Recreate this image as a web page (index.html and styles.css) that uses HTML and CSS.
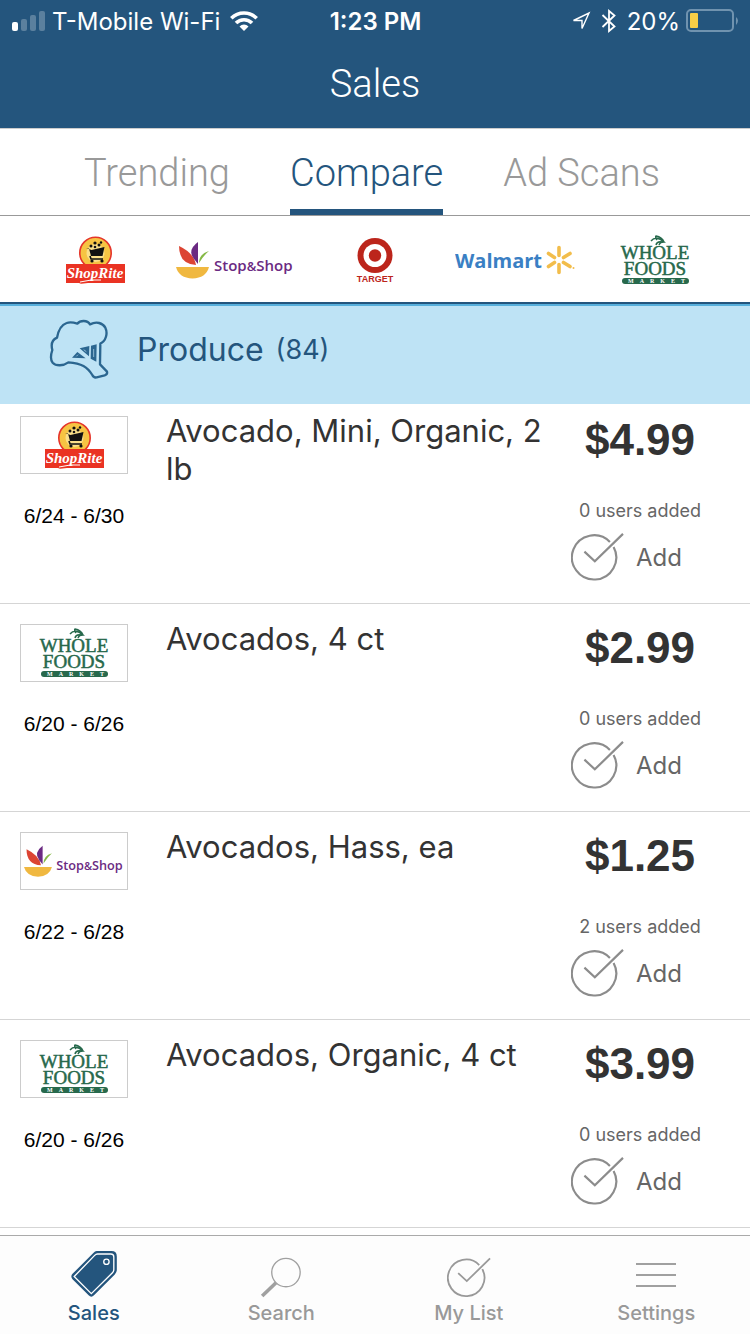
FILE: index.html
```html
<!DOCTYPE html>
<html lang="en">
<head>
    <meta charset="UTF-8">
    <meta name="viewport" content="width=device-width, initial-scale=1.0">
    <title>Sales</title>
    <link rel="stylesheet" href="styles.css">
</head>
<body>
    <!-- shared logos and icons -->
    <svg class="sprite" aria-hidden="true">
        <symbol id="shoprite" viewBox="0 0 60 48">
            <circle cx="30.5" cy="17" r="15.7" fill="#f6c443" stroke="#e5352b" stroke-width="1.6"/>
            <circle cx="30.5" cy="17" r="9" fill="#fbe08a"/>
            <path d="M21 12l3 .6 2 7.400h11.500l2-9-13 3z" fill="#111"/>
            <path d="M25 20l1 3h12" fill="none" stroke="#111" stroke-width="1.6"/>
            <circle cx="27" cy="25" r="1.6" fill="#111"/>
            <circle cx="37" cy="25" r="1.6" fill="#111"/>
            <circle cx="26" cy="10" r="1.500" fill="#111"/>
            <circle cx="30" cy="7" r="1.600" fill="#111"/>
            <circle cx="34" cy="9" r="1.500" fill="#111"/>
            <circle cx="30" cy="11" r="1.300" fill="#111"/>
            <circle cx="36" cy="6.500" r="1.200" fill="#111"/>
            <path d="M1 28h59v19H23l-9 1 2-1H1z" fill="#ea3323"/>
            <text class="shoprite-name" x="30" y="42" text-anchor="middle">ShopRite</text>
            <path d="M15 46q12-3 21-2" fill="none" stroke="#fff" stroke-width="1"/>
        </symbol>
        <symbol id="stopshop" viewBox="0 0 118 40">
            <path d="M0 27h33q-3 11-16.500 11.500Q3 38 0 27z" fill="#f0b840"/>
            <path d="M3 6q0 18 17 19Q18 13 3 6z" fill="#dc4433"/>
            <path d="M22 2q-11 8-4 17l4 5z" fill="#6b2a82"/>
            <path d="M23 23q0-9 10-12-5 4-10 12z" fill="#86b946"/>
            <text class="stopshop-name" x="38" y="31">Stop<tspan class="amp">&amp;</tspan>Shop</text>
        </symbol>
        <symbol id="target" viewBox="0 0 40 48">
            <circle cx="20" cy="19.500" r="17.500" fill="#bc251b"/>
            <circle cx="20" cy="19.500" r="11.500" fill="#fff"/>
            <circle cx="20" cy="19.500" r="6.200" fill="#bc251b"/>
            <text class="target-name" x="20" y="46" text-anchor="middle">TARGET</text>
        </symbol>
        <symbol id="walmart" viewBox="0 0 120 36">
            <text class="walmart-name" x="0" y="26">Walmart</text>
            <path d="M104 13.500v-8M104 22.500v8M108.500 15.500l6.500-4M108.500 20.500l6.500 4M99.500 15.500l-6-4M99.500 20.500l-6 4" stroke="#f2bd4b" stroke-width="3.600" stroke-linecap="round"/>
            <circle cx="118.500" cy="26" r="1" fill="#f2bd4b"/>
        </symbol>
        <symbol id="wholefoods" viewBox="0 0 70 50">
            <text class="whole-name" x="35" y="24" text-anchor="middle">WHOLE</text>
            <text class="whole-name" x="35" y="40" text-anchor="middle">FOODS</text>
            <path d="M31 6q5-6 13 1-4 0-5 3M37 5q-2-3-1-4 6 1 8 6M36 10q1-4 6-3" fill="none" stroke="#27694c" stroke-width="1.500"/>
            <rect x="2" y="43" width="67" height="6" rx="3" fill="#27694c"/>
            <text class="market-name" x="8" y="48">MARKET</text>
        </symbol>
        <symbol id="check" viewBox="60 382 158 148">
            <path d="M187 426A66 66 0 1 1 176 411M100 440L131 469L215 387" fill="none" stroke="currentColor" stroke-width="6.500"/>
        </symbol>
    </svg>

    <header class="header">
        <div class="status">
            <div class="status-side">
                <svg width="34" height="20" viewBox="0 0 34 20" fill="#fff">
                    <rect x="0" y="11" width="6" height="9" rx="2"/>
                    <g opacity=".25">
                        <rect x="9" y="8" width="6" height="12" rx="2"/>
                        <rect x="18" y="4" width="6" height="16" rx="2"/>
                        <rect x="27" y="0" width="6" height="20" rx="2"/>
                    </g>
                </svg>
                <span class="carrier">T-Mobile Wi-Fi</span>
                <svg class="wifi" width="28" height="20" viewBox="0 0 28 20" fill="none" stroke="#fff" stroke-width="3.600">
                    <path d="M1.300 7.300a18 18 0 0 1 25.400 0M6 12a11.300 11.300 0 0 1 16 0"/>
                    <path d="M14 20l-4.500-4.600a6.400 6.400 0 0 1 9 0z" fill="#fff" stroke="none"/>
                </svg>
            </div>
            <time class="clock">1:23 PM</time>
            <div class="status-side status-right">
                <svg width="20" height="20" viewBox="0 0 20 20" fill="none" stroke="#fff" stroke-width="1.400">
                    <path d="M18 2L11 17.500V9.500H2.500z"/>
                </svg>
                <svg class="bluetooth" width="16" height="24" viewBox="0 0 16 24" fill="none" stroke="#fff" stroke-width="1.800">
                    <path d="M1.500 6l12 11.500L8 22V2l5.500 4.500L1.500 18"/>
                </svg>
                <span>20%</span>
                <svg class="battery" width="53" height="24" viewBox="0 0 53 24">
                    <rect x="1" y="1" width="46" height="21" rx="4" fill="none" stroke="#7093af" stroke-width="2"/>
                    <rect x="4" y="4" width="8" height="15" rx="1" fill="#f8ce46"/>
                    <path d="M50 8q4 3.500 0 8z" fill="#7093af"/>
                </svg>
            </div>
        </div>
        <h1 class="title">Sales</h1>
    </header>

    <nav class="tabs">
        <a href="#trending">Trending</a>
        <a href="#compare" class="active">Compare</a>
        <a href="#scans">Ad Scans</a>
    </nav>

    <main class="main">
        <div class="stores">
            <svg width="60" height="48" role="img" aria-label="ShopRite"><use href="#shoprite"/></svg>
            <svg width="118" height="40" role="img" aria-label="Stop&amp;Shop"><use href="#stopshop"/></svg>
            <svg width="40" height="48" role="img" aria-label="Target"><use href="#target"/></svg>
            <svg width="120" height="36" role="img" aria-label="Walmart"><use href="#walmart"/></svg>
            <svg width="70" height="50" role="img" aria-label="Whole Foods Market"><use href="#wholefoods"/></svg>
        </div>

        <h2 class="category">
            <svg width="60" height="60" viewBox="147 72 180 180">
                <path d="M205 202C190 213 168 214 158 203C150 193 152 180 157 165C153 150 155 135 171 128C174 112 182 90 200 84C210 80 220 82 232 86C240 76 262 74 270 88C290 78 308 84 316 98C324 115 318 138 301 146L300 208L321 230Q323 238 314 241L290 247Q281 249 277 240C262 215 245 205 205 202Z" fill="none" stroke="#2b6690" stroke-width="7" stroke-linejoin="round"/>
                <path d="M216 188L232 171L257 190ZM239 160L268 153L267 184L258 176ZM273 152L290 148L289 200L272 191Z" fill="#2b6690"/>
                <path d="M229 184l5-5M251 164l8 6M281 162v24" stroke="#bee3f5" stroke-width="2"/>
            </svg>
            <span>Produce</span>
            <span class="count">(84)</span>
        </h2>

        <ul class="items">
            <li class="item">
                <div class="store">
                    <div class="logo"><svg width="60" height="48" role="img" aria-label="ShopRite"><use href="#shoprite"/></svg></div>
                    <p class="dates">6/24 - 6/30</p>
                </div>
                <h3 class="name">Avocado, Mini, Organic, 2 lb</h3>
                <div class="deal">
                    <strong class="price">$4.99</strong>
                    <p class="users">0 users added</p>
                    <button class="add" type="button"><svg width="53" height="50"><use href="#check"/></svg>Add</button>
                </div>
            </li>
            <li class="item">
                <div class="store">
                    <div class="logo"><svg width="70" height="50" role="img" aria-label="Whole Foods Market"><use href="#wholefoods"/></svg></div>
                    <p class="dates">6/20 - 6/26</p>
                </div>
                <h3 class="name">Avocados, 4 ct</h3>
                <div class="deal">
                    <strong class="price">$2.99</strong>
                    <p class="users">0 users added</p>
                    <button class="add" type="button"><svg width="53" height="50"><use href="#check"/></svg>Add</button>
                </div>
            </li>
            <li class="item">
                <div class="store">
                    <div class="logo"><svg width="100" height="34" role="img" aria-label="Stop&amp;Shop"><use href="#stopshop"/></svg></div>
                    <p class="dates">6/22 - 6/28</p>
                </div>
                <h3 class="name">Avocados, Hass, ea</h3>
                <div class="deal">
                    <strong class="price">$1.25</strong>
                    <p class="users">2 users added</p>
                    <button class="add" type="button"><svg width="53" height="50"><use href="#check"/></svg>Add</button>
                </div>
            </li>
            <li class="item">
                <div class="store">
                    <div class="logo"><svg width="70" height="50" role="img" aria-label="Whole Foods Market"><use href="#wholefoods"/></svg></div>
                    <p class="dates">6/20 - 6/26</p>
                </div>
                <h3 class="name">Avocados, Organic, 4 ct</h3>
                <div class="deal">
                    <strong class="price">$3.99</strong>
                    <p class="users">0 users added</p>
                    <button class="add" type="button"><svg width="53" height="50"><use href="#check"/></svg>Add</button>
                </div>
            </li>
        </ul>
    </main>

    <nav class="bottom">
        <a href="#sales" class="active">
            <svg width="48" height="48" viewBox="211 91 142 143">
                <path d="M290 94H334Q350 94 350 110V150Q350 158 344 164L282 226Q274 234 266 226L218 178Q211 170 218 162L280 100Q285 94 290 94Z" fill="#24557d"/>
                <path d="M292 103H332Q341 103 341 112V149Q341 155 337 159L274 221L223 170L284 107Q288 103 292 103Z" fill="none" stroke="#fff" stroke-width="4"/>
                <circle cx="319" cy="126" r="8" fill="none" stroke="#fff" stroke-width="4"/>
            </svg>
            <span>Sales</span>
        </a>
        <a href="#search">
            <svg width="42" height="41" viewBox="780 104 126 124" fill="none" stroke="#a0a0a0">
                <circle cx="858" cy="151" r="43" stroke-width="4"/>
                <path d="M828 182L786 222" stroke-width="11"/>
            </svg>
            <span>Search</span>
        </a>
        <a href="#list">
            <svg width="44" height="41"><use href="#check"/></svg>
            <span>My List</span>
        </a>
        <a href="#settings">
            <svg width="40" height="41" viewBox="0 0 40 41" stroke="#a0a0a0" stroke-width="2">
                <path d="M0 7h40M0 18h40M0 29h40"/>
            </svg>
            <span>Settings</span>
        </a>
    </nav>
</body>
</html>
```
FILE: styles.css
```css
*{
    margin: 0;
    padding: 0;
    box-sizing: border-box;
}
body{
    min-height: 100vh;
    display: flex;
    flex-direction: column;
    background-color: #fff;
    color: #333;
    font-family: Inter, "Liberation Sans", sans-serif;
}
svg{
    display: block;
    flex: none;
}
a{
    color: #999;
    text-decoration: none;
}
.sprite{
    position: absolute;
    width: 0;
    height: 0;
}

/* header */
.header{
    height: 128px;
    background-color: #24557d;
    color: #fff;
}
.status{
    display: flex;
    align-items: center;
    height: 42px;
    padding: 0 11px 0 12px;
    font-size: 24px;
}
.status-side{
    flex: 1;
    display: flex;
    align-items: center;
}
.status-right{
    justify-content: flex-end;
}
.carrier{
    margin: 0 10px 0 6px;
}
.clock{
    font-weight: 600;
}
.bluetooth{
    margin: 0 10px;
}
.battery{
    margin-left: 6px;
}
.title{
    font: 300 38px/84px Roboto, "Liberation Sans", sans-serif;
    text-align: center;
}

/* top tabs */
.tabs{
    display: flex;
    justify-content: center;
    gap: 60px;
    height: 88px;
    padding-right: 6px;
    border-top: 1px solid #ccc;
    border-bottom: 1px solid #999;
    font: 300 38px/88px Roboto, "Liberation Sans", sans-serif;
}
.tabs .active{
    border-bottom: 6px solid #24557d;
    color: #24557d;
}

/* store logos */
.main{
    flex: 1;
}
.stores{
    display: grid;
    grid-template-columns: repeat(5, 1fr);
    align-items: center;
    justify-items: center;
    height: 88px;
    padding: 2px 25px 0;
    border-bottom: 2px solid #24557d;
}
.shoprite-name{
    font: italic 700 15px "Liberation Serif", serif;
    fill: #fff;
}
.stopshop-name{
    font: 600 15px "Open Sans", sans-serif;
    fill: #6b2a82;
}
.stopshop-name .amp{
    font-size: 13px;
}
.target-name{
    font: 700 9px "Liberation Sans", sans-serif;
    fill: #bc251b;
}
.walmart-name{
    font: 700 20px "Open Sans", sans-serif;
    fill: #3a80c4;
}
.whole-name{
    font: 19px "Liberation Serif", serif;
    fill: #27694c;
    stroke: #27694c;
    stroke-width: .5;
}
.market-name{
    font: 700 6px "Liberation Serif", serif;
    letter-spacing: 6px;
    fill: #fff;
}

.category{
    display: flex;
    align-items: center;
    height: 100px;
    padding: 0 49px 12px;
    border-top: 2px solid #57afdb;
    background-color: #bee3f5;
    color: #24557d;
    font-size: 32px;
    font-weight: 400;
}
.category svg{
    margin-right: 28px;
}
.count{
    margin-left: 12px;
    font-size: 27px;
}

/* product rows */
.items{
    list-style: none;
}
.item{
    display: grid;
    grid-template-columns: 108px 1fr 138px;
    column-gap: 20px;
    min-height: 208px;
    padding: 16px 41px 16px 20px;
    border-bottom: 1px solid #d5d5d5;
}
.item:first-child{
    min-height: 200px;
    padding-top: 8px;
}
.logo{
    display: flex;
    align-items: center;
    justify-content: center;
    height: 58px;
    margin-top: 4px;
    border: 1px solid #ccc;
}
.dates{
    margin-top: 30px;
    color: #000;
    font: 21px/24px "Liberation Sans", sans-serif;
    text-align: center;
}
.name{
    padding-left: 18px;
    font-size: 31px;
    font-weight: 400;
    line-height: 38px;
}
.deal{
    text-align: center;
}
.price{
    display: block;
    font: 700 44px/56px "Liberation Sans", sans-serif;
}
.users{
    margin-top: 31px;
    color: #666;
    font-size: 18px;
    line-height: 24px;
}
.add{
    display: flex;
    align-items: center;
    gap: 12px;
    margin-top: 9px;
    border: 0;
    background: none;
    color: #666;
    font: 24px Inter, sans-serif;
}
.add svg{
    color: #8c8c8c;
}

/* bottom bar */
.bottom{
    position: sticky;
    bottom: 0;
    display: grid;
    grid-template-columns: repeat(4, 1fr);
    height: 99px;
    border-top: 1px solid #aaa;
    background-color: #fdfdfd;
    font-size: 20px;
    font-weight: 500;
    line-height: 24px;
}
.bottom a{
    display: flex;
    flex-direction: column;
    align-items: center;
    justify-content: flex-end;
    padding-bottom: 9px;
}
.bottom svg{
    margin-bottom: 3px;
}
.bottom .active{
    color: #24557d;
}
```
